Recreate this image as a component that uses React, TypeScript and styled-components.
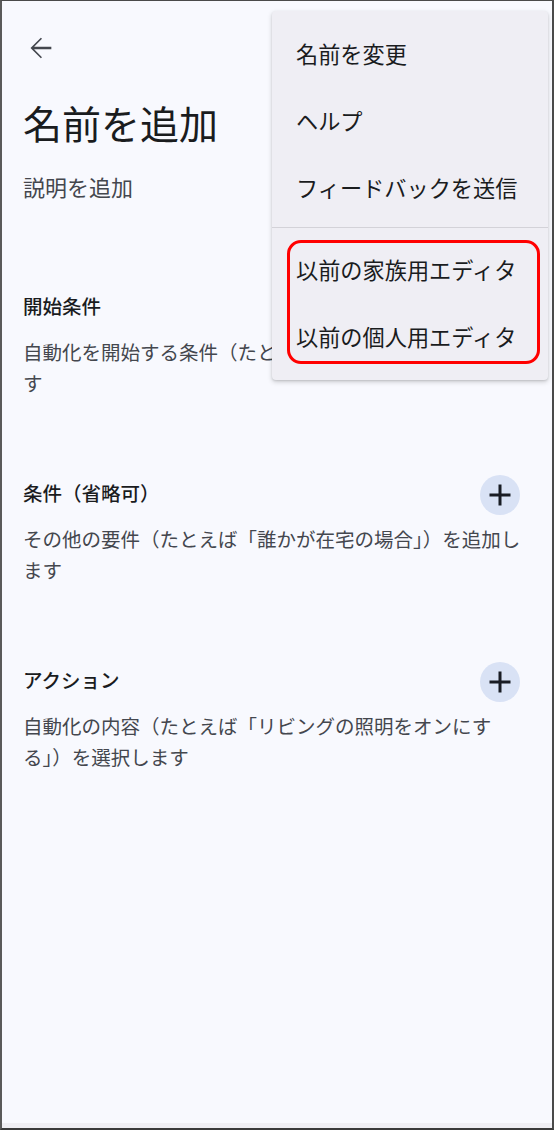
import React from "react"
import styled, { createGlobalStyle } from "styled-components"

const GlobalStyle = createGlobalStyle`
    html, body {
        margin: 0;
        padding: 0;
        background: #f8f9fe;
    }
    * {
        box-sizing: border-box;
    }
`

const Frame = styled.div`
    position: relative;
    width: 554px;
    height: 1130px;
    overflow: hidden;
    background: #f8f9fe;
    border-top: 1px solid #4a4a4a;
    border-left: 2px solid #5a5a5a;
    border-right: 2px solid #4a4a4a;
    border-bottom: 2px solid #3a3a3a;
    font-family: "Noto Sans CJK JP", "Noto Sans", sans-serif;
    color: #1a1c1e;
    display: flex;
    flex-direction: column;
`

const Content = styled.div`
    flex: 1;
    padding: 23px 23px 0 21px;
`

const TopBar = styled.div`
    height: 48px;
    display: flex;
    align-items: center;
`

const BackButton = styled.button`
    width: 36px;
    height: 36px;
    padding: 0;
    margin-left: -1px;
    border: none;
    background: transparent;
    display: flex;
    align-items: center;
    justify-content: center;
    color: #44474e;
`

const Title = styled.h1`
    margin: 26px 0 0;
    font-size: 39px;
    line-height: 48px;
    font-weight: 400;
    color: #1a1c1e;
`

const Subtitle = styled.p`
    margin: 24px 0 0;
    font-size: 22px;
    line-height: 32px;
    color: #44474e;
`

const Sections = styled.div`
    margin-top: 84px;
    display: flex;
    flex-direction: column;
    gap: 75px;
`

const SectionHead = styled.div`
    height: 40px;
    display: flex;
    align-items: center;
    justify-content: space-between;
`

const SectionTitle = styled.h2`
    margin: 0;
    font-size: 19.5px;
    line-height: 32px;
    font-weight: 500;
    color: #1a1c1e;
`

const AddButton = styled.button`
    width: 40px;
    height: 40px;
    margin-right: 9px;
    margin-top: 4px;
    padding: 0;
    border: none;
    border-radius: 50%;
    background: #d9e2f5;
    display: flex;
    align-items: center;
    justify-content: center;
    color: #191c24;
`

const Description = styled.p`
    margin: 10px 0 0;
    font-size: 19.5px;
    line-height: 31px;
    color: #44474e;
`

const NavStrip = styled.div`
    height: 5px;
    background: #efeef3;
`

const Menu = styled.div`
    position: absolute;
    top: 10px;
    left: 270px;
    width: 276px;
    padding: 8px 0 11px;
    background: #efeef4;
    border-radius: 4px;
    box-shadow: 0 2px 5px rgba(0, 0, 0, 0.18), 0 1px 2px rgba(0, 0, 0, 0.1);
`

const MenuItem = styled.div`
    height: 67px;
    padding-left: 24px;
    display: flex;
    align-items: center;
    font-size: 22.2px;
    color: #1a1c1e;
`

const Divider = styled.div`
    height: 1px;
    margin: 7px 0;
    background: #d3d2d8;
`

const Highlight = styled.div`
    position: relative;
`

const RedBox = styled.div`
    position: absolute;
    top: 5px;
    bottom: 5px;
    left: 15px;
    right: 8px;
    border: 3px solid #f00;
    border-radius: 14px;
    pointer-events: none;
`

const ArrowBack = () => (
    <svg width="34" height="34" viewBox="0 0 24 24" fill="currentColor">
        <path d="M20 11.1H7.83l5.59-5.59L12.6 4.7l-7.3 7.3 7.3 7.3.82-.82-5.59-5.59H20v-1.8z" />
    </svg>
)

const PlusIcon = () => (
    <svg width="36" height="36" viewBox="0 0 24 24" fill="currentColor">
        <path d="M19 13h-6v6h-2v-6H5v-2h6V5h2v6h6v2z" />
    </svg>
)

const sections = [
    {
        title: "開始条件",
        text: "自動化を開始する条件（たとえば「日没時」）を追加します",
    },
    {
        title: "条件（省略可）",
        text: "その他の要件（たとえば「誰かが在宅の場合」）を追加します",
    },
    {
        title: "アクション",
        text: "自動化の内容（たとえば「リビングの照明をオンにする」）を選択します",
    },
]

export default function App() {
    return (
        <>
            <GlobalStyle />
            <Frame>
                <Content>
                    <TopBar>
                        <BackButton aria-label="戻る"><ArrowBack /></BackButton>
                    </TopBar>
                    <Title>名前を追加</Title>
                    <Subtitle>説明を追加</Subtitle>
                    <Sections>
                        {sections.map((s) => (
                            <section key={s.title}>
                                <SectionHead>
                                    <SectionTitle>{s.title}</SectionTitle>
                                    <AddButton aria-label="追加"><PlusIcon /></AddButton>
                                </SectionHead>
                                <Description>{s.text}</Description>
                            </section>
                        ))}
                    </Sections>
                </Content>
                <NavStrip />
                <Menu>
                    <MenuItem>名前を変更</MenuItem>
                    <MenuItem>ヘルプ</MenuItem>
                    <MenuItem>フィードバックを送信</MenuItem>
                    <Divider />
                    <Highlight>
                        <MenuItem>以前の家族用エディタ</MenuItem>
                        <MenuItem>以前の個人用エディタ</MenuItem>
                        <RedBox />
                    </Highlight>
                </Menu>
            </Frame>
        </>
    )
}
